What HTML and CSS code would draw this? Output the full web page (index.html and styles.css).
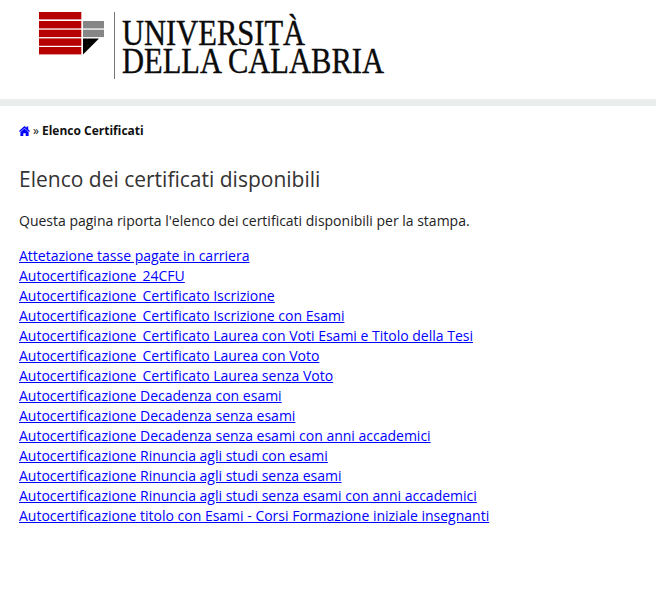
FILE: index.html
```html
<!DOCTYPE html>
<html lang="it">
<head>
<meta charset="utf-8">
<title>Elenco Certificati</title>
<link rel="stylesheet" href="styles.css">
</head>
<body>
<header class="site-header">
  <div class="logo">
    <svg class="logo-mark" width="70" height="44" viewBox="0 0 70 44" aria-hidden="true">
      <rect x="0" y="0" width="42.300" height="7.400" fill="#b70000"/>
      <rect x="0" y="9" width="42.300" height="7.400" fill="#b70000"/>
      <rect x="0" y="17.700" width="42.300" height="7.400" fill="#b70000"/>
      <rect x="0" y="26.400" width="42.300" height="7.400" fill="#b70000"/>
      <rect x="0" y="35" width="42.300" height="7.400" fill="#b70000"/>
      <rect x="44" y="9" width="21" height="7.400" fill="#868686"/>
      <rect x="44" y="17.700" width="21" height="7.400" fill="#868686"/>
      <polygon points="44,26.400 60,26.400 44,42.400" fill="#000"/>
    </svg>
    <div class="logo-rule"></div>
    <div class="logo-text">
      <div class="logo-line">UNIVERSITÀ</div>
      <div class="logo-line">DELLA CALABRIA</div>
    </div>
  </div>
</header>
<main class="content">
  <nav class="breadcrumb">
    <a href="#" class="home"><svg width="11" height="10" viewBox="0 0 11 10" aria-hidden="true"><path fill="#0000ff" d="M5.500 0 L7.500 1.800 V0.500 H9.200 V3.300 L11 5 L10.100 6 L5.500 1.900 L0.900 6 L0 5 Z M5.500 2.600 L9.600 6.200 V10 H6.700 V7.200 H4.300 V10 H1.400 V6.200 Z"/></svg></a>
    <span class="sep">»</span>
    <strong>Elenco Certificati</strong>
  </nav>
  <h1>Elenco dei certificati disponibili</h1>
  <p class="intro">Questa pagina riporta l'elenco dei certificati disponibili per la stampa.</p>
  <ul class="links">
    <li><a href="#">Attetazione tasse pagate in carriera</a></li>
    <li><a href="#">Autocertificazione_24CFU</a></li>
    <li><a href="#">Autocertificazione_Certificato Iscrizione</a></li>
    <li><a href="#">Autocertificazione_Certificato Iscrizione con Esami</a></li>
    <li><a href="#">Autocertificazione_Certificato Laurea con Voti Esami e Titolo della Tesi</a></li>
    <li><a href="#">Autocertificazione_Certificato Laurea con Voto</a></li>
    <li><a href="#">Autocertificazione_Certificato Laurea senza Voto</a></li>
    <li><a href="#">Autocertificazione Decadenza con esami</a></li>
    <li><a href="#">Autocertificazione Decadenza senza esami</a></li>
    <li><a href="#">Autocertificazione Decadenza senza esami con anni accademici</a></li>
    <li><a href="#">Autocertificazione Rinuncia agli studi con esami</a></li>
    <li><a href="#">Autocertificazione Rinuncia agli studi senza esami</a></li>
    <li><a href="#">Autocertificazione Rinuncia agli studi senza esami con anni accademici</a></li>
    <li><a href="#">Autocertificazione titolo con Esami - Corsi Formazione iniziale insegnanti</a></li>
  </ul>
</main>
</body>
</html>
```
FILE: styles.css
```css
html, body {
  margin: 0;
  padding: 0;
  background: #fff;
}
body {
  font-family: "Open Sans", sans-serif;
  font-size: 14px;
  line-height: 20px;
  color: #222;
}
.site-header {
  height: 99px;
  border-bottom: 7px solid #e9eeec;
}
.logo {
  display: flex;
  align-items: flex-start;
  padding: 12px 0 0 39px;
}
.logo-mark {
  flex: none;
}
.logo-rule {
  width: 1px;
  height: 67px;
  background: #777;
  margin-left: 5px;
  flex: none;
}
.logo-text {
  margin-left: 7px;
  font-family: "Liberation Serif", serif;
  color: #0b0b0b;
  font-size: 35px;
  line-height: 28px;
  white-space: nowrap;
  padding-top: 8px;
  -webkit-text-stroke: 0.4px #0b0b0b;
  transform: scaleX(0.872);
  transform-origin: left top;
}
.content {
  padding: 15px 19px 0;
}
.breadcrumb {
  font-size: 12px;
  line-height: 20px;
  color: #111;
  display: flex;
  align-items: center;
  gap: 3px;
}
.home { display: flex; }
.breadcrumb strong { font-weight: 700; }
h1 {
  font-size: 21px;
  font-weight: 400;
  line-height: 28px;
  color: #333;
  margin: 24px 0 0;
}
.intro {
  margin: 18px 0 0;
}
.links {
  list-style: none;
  margin: 15px 0 0;
  padding: 0;
}
.links a { color: #0000ff; }
```
